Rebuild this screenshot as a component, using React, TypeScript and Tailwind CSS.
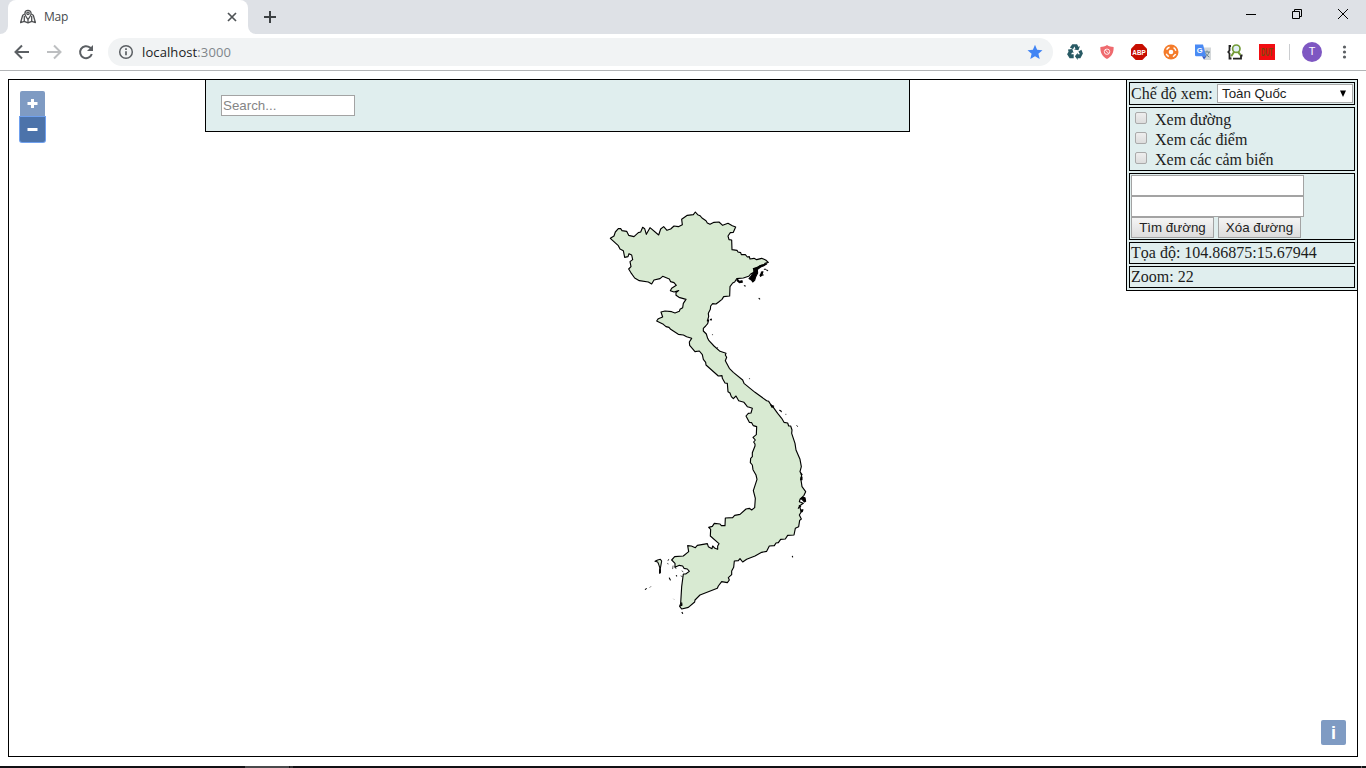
import React from "react";

type Point = [number, number];

const place = (dx: number, dy: number, pts: number[]): Point[] => {
  const out: Point[] = [];
  for (let i = 0; i < pts.length; i += 2) out.push([pts[i] + dx, pts[i + 1] + dy]);
  return out;
};

// Outline, clockwise from the northern tip. Units are thirds of a pixel.
const outline: Point[] = [
  ...place(0, 0, [
    286, 36, 293, 44, 300, 47, 306, 54, 318, 62, 322, 69, 330, 73, 342, 67, 357, 66, 368, 76, 384, 70, 397, 77, 407, 81,
    400, 97, 391, 98, 384, 108, 387, 119, 395, 120, 396, 149, 411, 151, 414, 156, 422, 158, 424, 164, 436, 164, 442, 171,
    448, 170, 450, 177, 462, 175, 470, 179, 485, 175, 497, 180, 505, 187, 495, 190, 492, 195, 480, 197, 470, 204, 460, 206,
    463, 216, 452, 222, 446, 229, 430, 234, 410, 236, 404, 246, 398, 249, 390, 260, 389, 288, 371, 290, 366, 298, 356, 306, 348, 312,
    338, 311, 332, 318, 331, 328, 325, 340, 326, 350, 322, 363,
  ]),
  ...place(120, 360, [
    206, 0, 203, 11, 197, 18, 190, 25, 190, 33, 199, 42, 203, 55, 207, 62, 222, 78, 240, 94, 258, 100, 256, 105, 260, 112, 256, 122,
    268, 145, 280, 157, 308, 180, 312, 190, 345, 217, 380, 242, 386, 244, 393, 255, 400, 262, 413, 280, 425, 295, 432, 307,
    443, 309, 446, 318, 452, 318, 456, 330, 455, 340, 465, 370, 468, 390, 480, 418,
  ]),
  ...place(120, 720, [
    484, 80, 480, 95, 485, 103, 483, 120, 486, 140, 497, 155, 492, 166, 480, 178, 478, 185, 490, 190, 478, 198, 484, 215,
    478, 225, 484, 237, 479, 241, 476, 260, 466, 265, 462, 285, 443, 286, 436, 297, 422, 298, 415, 308, 408, 309,
    403, 317, 388, 318, 380, 334, 365, 337, 345, 348, 320, 358, 308, 366, 300, 356, 295, 362, 283, 363, 281, 382, 275, 393,
    275, 404, 265, 413, 268, 420, 262, 428, 245, 425, 235, 438, 232, 445, 180, 465, 165, 480, 164, 486, 145, 502, 125, 507, 119, 499,
    122, 490, 125, 440, 130, 402, 137, 402, 148, 394, 142, 387, 132, 385, 128, 378, 118, 376, 105, 382, 105, 370, 95, 360,
    104, 350, 130, 348, 146, 335, 143, 317, 154, 318, 166, 323, 172, 316, 202, 311, 205, 320, 216, 326, 218, 318, 225, 325,
    233, 328, 233, 318, 237, 311, 211, 288, 212, 268, 206, 262, 217, 259, 223, 250, 240, 252, 244, 257, 255, 257, 256, 234,
    278, 233, 284, 226, 300, 223, 318, 207, 328, 205, 335, 210, 344, 203, 346, 175, 340, 152, 351, 118, 348, 105, 339, 89, 337, 75, 331, 68,
    332, 55, 337, 50, 337, 38, 345, 18,
  ]),
  ...place(120, 360, [
    345, 372, 341, 366, 346, 360, 339, 352, 349, 344, 350, 320, 340, 317, 335, 308, 328, 307, 318, 288, 325, 280, 333, 279, 337, 265,
    328, 262, 322, 260, 312, 247, 296, 242, 288, 228, 280, 236, 274, 230, 270, 219, 264, 215, 262, 190, 255, 189, 247, 175,
    246, 167, 235, 168, 198, 135, 197, 127, 190, 118, 187, 104, 178, 93, 165, 95, 149, 76, 148, 66, 155, 55, 140, 50, 130, 45, 115, 43,
    92, 28, 87, 22, 78, 20, 70, 13, 50, 3,
  ]),
  ...place(0, 0, [
    175, 356, 188, 351, 183, 336, 195, 333, 215, 335, 225, 339, 238, 334, 240, 328, 248, 323, 250, 310, 258, 298, 237, 292, 228, 286,
    228, 278, 236, 272, 222, 276, 211, 272, 215, 265, 229, 256, 222, 248, 212, 245, 208, 237, 188, 229, 180, 236, 162, 240, 155, 252,
    145, 246, 118, 242, 104, 234, 92, 217, 86, 207, 93, 200, 90, 185, 98, 179, 95, 165, 87, 161, 84, 170, 74, 172, 70, 152, 60, 147,
    55, 137, 45, 128, 31, 115, 42, 108, 46, 96, 55, 86, 62, 86, 66, 92, 80, 94, 86, 106, 102, 110, 115, 98, 122, 96, 128, 82,
    134, 86, 139, 103, 150, 83, 176, 105, 182, 87, 191, 80, 201, 91, 212, 87, 222, 78, 235, 80, 247, 74, 245, 58, 262, 46, 280, 44,
  ]),
];

const CountryMap = () => (
  <svg className="absolute top-[120px] left-[591px] h-[420px] w-[220px]" viewBox="0 0 660 1260">
    <polygon
      points={outline.map((p) => p.join(",")).join(" ")}
      fill="#d8ead2"
      stroke="#000"
      strokeWidth="3.4"
      strokeLinejoin="round"
    />
    {/* islands */}
    <g stroke="#000" strokeWidth="3.2" strokeLinejoin="round" strokeLinecap="round">
      <path d="M464 205l10-4 12-6 14-3-8 5-10 4-10 8 1 10-6 12-3 10-6 5-3-5-8-5 5-6 5-8 4-4z" />
      <path d="M412 237l6 7 8-2 1 5-9 1-7-6zM433 257l3 1M484 216l5-1-3 9-4 5-2-3 4-7zM493 208h4M500 210l3 2M477 295l2 2M486 226l4-1" />
      <path d="M331 359l3-2v3zM512 614l5 3 4 1-5 4zM539 631l4 2 1 2" />
      <path d="M603 832l3-1v8h-4zM602 822l4 1M609 892l6 1 2 11-4 2-7-8-5-2zM598 917l4 3-3 1zM603 930l6-1-2 6h-4zM597 921l-2 4M577 1069l1 2" />
      <path d="M165 1084l8-4 8-2 4 5-4 23-2 14 1-15-4-12-3-7z" fill="#d8ead2" />
      <path d="M179 1106l2 4v8h-2zM208 1134l3 6M229 1127l1 1M136 1168l3-2M246 1237l2 3M240 1218l6-2-1-8" />
    </g>
    <g stroke="#000" strokeWidth="2" strokeLinecap="round">
      <path d="M337 404h1M352 443h1M448 536h1M557 643h1M590 676l3 4M150 1162l2-2M246 1113l3 2M243 1128l4 2M206 1078l-2 4M203 1090l1 2M225 1100l3 6M219 1098l-1 8" />
    </g>
    <path d="M220 1196l4 4" stroke="#aaa" strokeWidth="2" />
  </svg>
);

const TabMapIcon = () => (
  <svg className="h-4 w-4" viewBox="0 0 16 16" fill="none" stroke="#4f5153" strokeWidth="1.3" strokeLinejoin="round">
    <path d="M4.6 5.100 2.700 6.200.6 13.600l3.600-1.200L8 13.900l3.800-1.500 3.600 1.200-2.100-7.400-1.900-1.100" />
    <path d="M8 10.400C6.200 8 4.900 6.300 4.900 4.400a3.100 3.100 0 0 1 6.200 0c0 1.900-1.300 3.600-3.100 6zM4.300 7v5.400M11.700 7v5.400M8 10.400V14" />
    <circle cx="8" cy="4.300" r="1.200" />
  </svg>
);

const Extensions = () => (
  <>
    <svg className="h-4 w-4" viewBox="0 0 16 16" fill="#285a64">
      <path d="M5.300.3h4.700l1.600 2.600 1.400-.8-1.600 4.200-4.400-.7 1.400-.9L7.400 2.600 6 5.200 2.900 3.600z" />
      <path d="M1 5.600l4.300-.5 1.300 4-1.500-.7-1 1.800h2.600v4H2.600L.1 10.200l1.400-2.500z" />
      <path d="M11.400 7.500l3-1.800 1.500 3.800-2.500 4.700h-2.700v1.700L7.900 12.300l2.800-3.500v1.500h2.200z" />
    </svg>
    <svg className="h-4 w-4" viewBox="0 0 16 16" fill="none">
      <path d="M8 1c2.200 1.600 4.200 1.900 6.600 2C14.900 8.500 12.900 12.500 8 14.900 3.100 12.500 1.100 8.500 1.400 3 3.800 2.900 5.800 2.600 8 1z" fill="#ef6a6e" />
      <circle cx="8" cy="7.700" r="2.700" stroke="#fff" strokeOpacity=".85" />
      <path d="m6.200 6 3.600 3.500" stroke="#fff" strokeOpacity=".85" />
    </svg>
    <svg className="h-4 w-4 overflow-visible" viewBox="0 0 16 16">
      <path d="M4.700 0h6.600L16 4.700v6.600L11.300 16H4.700L0 11.300V4.700z" fill="#c70d00" />
      <text x="1.300" y="10.800" fontSize="8" fontWeight="700" fill="#fff" textLength="13.400" lengthAdjust="spacingAndGlyphs" fontFamily="Liberation Sans, sans-serif">ABP</text>
    </svg>
    <svg className="h-4 w-4" viewBox="0 0 16 16" fill="none">
      <circle cx="8" cy="8" r="7.500" fill="#f47b2a" />
      <circle cx="8" cy="8" r="5" stroke="#fff" strokeWidth="1.500" strokeDasharray="3.600 4.250" strokeDashoffset="-2.100" />
      <circle cx="8" cy="8" r="2.300" fill="#fff" />
    </svg>
    <svg className="h-4 w-4" viewBox="0 0 16 16">
      <path d="M6 3.500h10V16H9z" fill="#d4d8da" />
      <path d="M9 8h6M12 6.500V8M10 13c2-1 3.500-3 4-5M10.500 9c.8 1.700 2 3 3.800 4" stroke="#69848c" fill="none" />
      <path d="M0 .5h8l3.200 11.800H1.200Q0 12.300 0 11z" fill="#4a8af4" />
      <path d="m7 12.300 4.200.2-2.200 3z" fill="#3358c4" />
      <text x="1.700" y="9.200" fontSize="7.500" fontWeight="700" fill="#fff" fontFamily="Liberation Sans, sans-serif">G</text>
    </svg>
    <svg className="h-4 w-4" viewBox="0 0 16 16" fill="none">
      <path d="M4 2H2.500v4.500L1.300 8l1.200 1.500v5H4.500M6 14.700h8v-3.200h1.500" stroke="#222" strokeWidth="1.800" />
      <circle cx="9.300" cy="4.700" r="3.700" fill="#e2f1f7" stroke="#739b37" strokeWidth="1.700" />
      <path d="m7.200 7.700-3 4.600M11 8l2.500 3" stroke="#739b37" strokeWidth="2" />
    </svg>
    <div className="flex h-4 w-4 items-center justify-center bg-[#f20d12]">
      <svg className="h-4 w-4 overflow-visible" viewBox="0 0 16 16">
        <text x="2" y="12" fontSize="10" fontWeight="700" textLength="12" lengthAdjust="spacingAndGlyphs" fill="#7a4a0c" fontFamily="Liberation Sans, sans-serif">DUT</text>
      </svg>
    </div>
  </>
);

const BrowserChrome = () => (
  <header className="h-[71px] shrink-0 border-b border-[#b2b4b6] bg-white font-['Open_Sans','Noto_Sans',sans-serif]">
    <div className="flex h-[34px] bg-[#dee1e6]">
      <div className="h-full w-2 bg-white">
        <div className="h-full w-full rounded-br-lg bg-[#dee1e6]" />
      </div>
      <div className="flex h-full w-60 items-center rounded-t-lg bg-white pr-2.5 pl-3">
        <TabMapIcon />
        <span className="ml-2 flex-1 text-[12px] tracking-[-0.2px] text-[#45494d]">Map</span>
        <svg className="h-3 w-3" viewBox="0 0 12 12" stroke="#4f5356" strokeWidth="1.700">
          <path d="m2 2 8 8M10 2l-8 8" />
        </svg>
      </div>
      <div className="h-full w-2 bg-white">
        <div className="h-full w-full rounded-bl-lg bg-[#dee1e6]" />
      </div>
      <svg className="mt-[11px] ml-2 h-3 w-3" viewBox="0 0 12 12" stroke="#3c4043" strokeWidth="2">
        <path d="M6 0v12M0 6h12" />
      </svg>
      <div className="mt-2 ml-auto flex gap-[34px] pr-[17px]">
        <svg className="h-3 w-3" viewBox="0 0 12 12" stroke="#000"><path d="M1 6.500h10" /></svg>
        <svg className="h-3 w-3" viewBox="0 0 12 12" fill="none" stroke="#000"><path d="M1.500 3.500h7v7h-7zM3.500 3V1.500h7v7H9" /></svg>
        <svg className="h-3 w-3" viewBox="0 0 12 12" stroke="#000"><path d="m1 1 10 10M11 1 1 11" /></svg>
      </div>
    </div>
    <div className="flex h-9 items-center pl-3.5">
      <svg className="h-4 w-4" viewBox="0 0 16 16" fill="none" stroke="#5b5f63" strokeWidth="2"><path d="M15 8H2M8 1.500 1.500 8 8 14.500" /></svg>
      <svg className="ml-4 h-4 w-4" viewBox="0 0 16 16" fill="none" stroke="#bdbfc1" strokeWidth="2"><path d="M1 8h13M8 1.500 14.500 8 8 14.500" /></svg>
      <svg className="ml-4 h-4 w-4" viewBox="0 0 16 16" fill="none" stroke="#5b5f63" strokeWidth="2">
        <path d="M13.800 10A6 6 0 1 1 12 3.600L14 5.500" />
        <path d="M15 1v6H9z" fill="#5b5f63" stroke="none" />
      </svg>
      <div className="ml-[14px] flex h-7 w-[945px] items-center rounded-full bg-[#f1f3f4] pr-2.5 pl-2.5">
        <svg className="h-4 w-4" viewBox="0 0 16 16" fill="none" stroke="#5b5f63" strokeWidth="1.500">
          <circle cx="8" cy="8" r="6.300" />
          <path d="M8 7.200v4M8 4.300V6" strokeWidth="1.700" />
        </svg>
        <span className="ml-2 flex-1 pt-px text-[13px] tracking-[0.1px] text-[#202124]">localhost<span className="text-[#80868b]">:3000</span></span>
        <svg className="h-4 w-4" viewBox="0 0 16 16" fill="#4285f4"><path d="m8 .8 2.100 5 5.400.5-4.100 3.500 1.300 5.300L8 12.300l-4.700 2.800 1.300-5.300L.5 6.300l5.400-.5z" /></svg>
      </div>
      <div className="ml-[14px] flex items-center gap-4">
        <Extensions />
      </div>
      <div className="ml-3.5 h-4 w-px bg-[#cbcdd0]" />
      <div className="ml-3 flex h-5 w-5 items-center justify-center rounded-full bg-[#7e57c2] font-['Roboto',sans-serif] text-[11px] text-white">T</div>
      <svg className="ml-[14px] h-4 w-4" viewBox="0 0 16 16" fill="#5b5f63">
        <circle cx="8.500" cy="3" r="1.600" /><circle cx="8.500" cy="8" r="1.600" /><circle cx="8.500" cy="13" r="1.600" />
      </svg>
    </div>
  </header>
);

const CheckRow = ({ label }: { label: string }) => (
  <label className="flex h-5">
    <input type="checkbox" className="mt-[3px] mr-2 ml-[5px] h-3 w-3 appearance-none rounded-[2px] border border-[#aaa] bg-linear-to-b from-[#eee] to-[#ddd]" />
    <span className="leading-[22px]">{label}</span>
  </label>
);

const PathButton = ({ children }: { children: React.ReactNode }) => (
  <button className="h-[21px] w-[83px] border border-[#a3a3a3] bg-linear-to-b from-[#f5f5f5] to-[#dddddd] font-['Liberation_Sans',sans-serif] text-[13.33px] leading-[19px] text-[#222] whitespace-nowrap">
    {children}
  </button>
);

const SidePanel = () => (
  <aside className="absolute -top-px -right-px flex h-[212px] w-[232px] flex-col gap-0.5 border border-black bg-[#e0eeee] p-0.5 text-[#1c1c1c]">
    <div className="flex h-[23px] border border-black pt-px pl-px">
      <span className="w-[86px] leading-[19px] whitespace-nowrap">Chế độ xem:</span>
      <div className="flex h-[19px] w-[136px] items-center justify-between border border-[#a9a9a9] bg-white pr-[5px] pl-1 font-['Liberation_Sans',sans-serif] text-[13.33px]">
        <span>Toàn Quốc</span>
        <svg className="h-2 w-2" viewBox="0 0 8 8"><path d="M1 .5h6L4 7z" /></svg>
      </div>
    </div>
    <div className="h-16 border border-black pt-px">
      <CheckRow label="Xem đường" />
      <CheckRow label="Xem các điểm" />
      <CheckRow label="Xem các cảm biến" />
    </div>
    <div className="flex h-[67px] flex-col border border-black pt-px pl-px">
      <input className="h-[21px] w-[173px] shrink-0 border border-[#a3a3a3] bg-white px-px" />
      <input className="h-[21px] w-[173px] shrink-0 border border-[#a3a3a3] bg-white px-px" />
      <div className="flex gap-1">
        <PathButton>Tìm đường</PathButton>
        <PathButton>Xóa đường</PathButton>
      </div>
    </div>
    <div className="h-[22px] border border-black pl-px leading-[20px]">Tọa độ: 104.86875:15.67944</div>
    <div className="h-[22px] border border-black pl-px leading-[20px]">Zoom: 22</div>
  </aside>
);

export default function App() {
  return (
    <div className="flex h-[768px] w-[1366px] flex-col overflow-hidden bg-white font-['Liberation_Serif',serif] text-[16px] text-black">
      <BrowserChrome />
      <main className="relative mx-2 mt-2 h-[678px] shrink-0 border border-black">
        <CountryMap />
        <div className="absolute top-[11px] left-[11px] flex w-[25px] flex-col gap-px">
          <button className="flex h-[25px] items-center justify-center rounded-t-[2px] bg-[#7f9bc3]">
            <svg className="h-[11px] w-[11px]" viewBox="0 0 11 11" stroke="#fff" strokeWidth="3"><path d="M5.500 1v9M.5 5.500h10" /></svg>
          </button>
          <button className="flex h-[25px] items-center justify-center rounded-b-[2px] bg-[#4c73aa] ring-1 ring-[#6fa0ee]">
            <svg className="h-[11px] w-[11px]" viewBox="0 0 11 11" stroke="#fff" strokeWidth="3"><path d="M.5 5.500h10" /></svg>
          </button>
        </div>
        <div className="absolute -top-px left-[196px] h-[53px] w-[705px] border border-black bg-[#e0eeee] pt-[15px] pl-[15px]">
          <input
            placeholder="Search..."
            className="block h-[21px] w-[134px] border border-[#a3a3a3] bg-white px-px font-['Liberation_Sans',sans-serif] text-[13.33px] placeholder:text-[#858585]"
          />
        </div>
        <SidePanel />
        <button className="absolute right-[11px] bottom-[11px] flex h-[25px] w-[25px] items-center justify-center rounded-[2px] bg-[#7f9bc3]">
          <span className="font-['Liberation_Sans',sans-serif] text-[18px] leading-none font-bold text-white">i</span>
        </button>
      </main>
      <footer className="mt-auto flex h-0.5 bg-[#111114]">
        <div className="ml-[245px] h-full w-11 bg-[#4a4a4c]" />
        <div className="ml-px h-full w-[3px] bg-[#333335]" />
        <div className="mr-1 ml-auto h-full w-px bg-[#66666a]" />
      </footer>
    </div>
  );
}
